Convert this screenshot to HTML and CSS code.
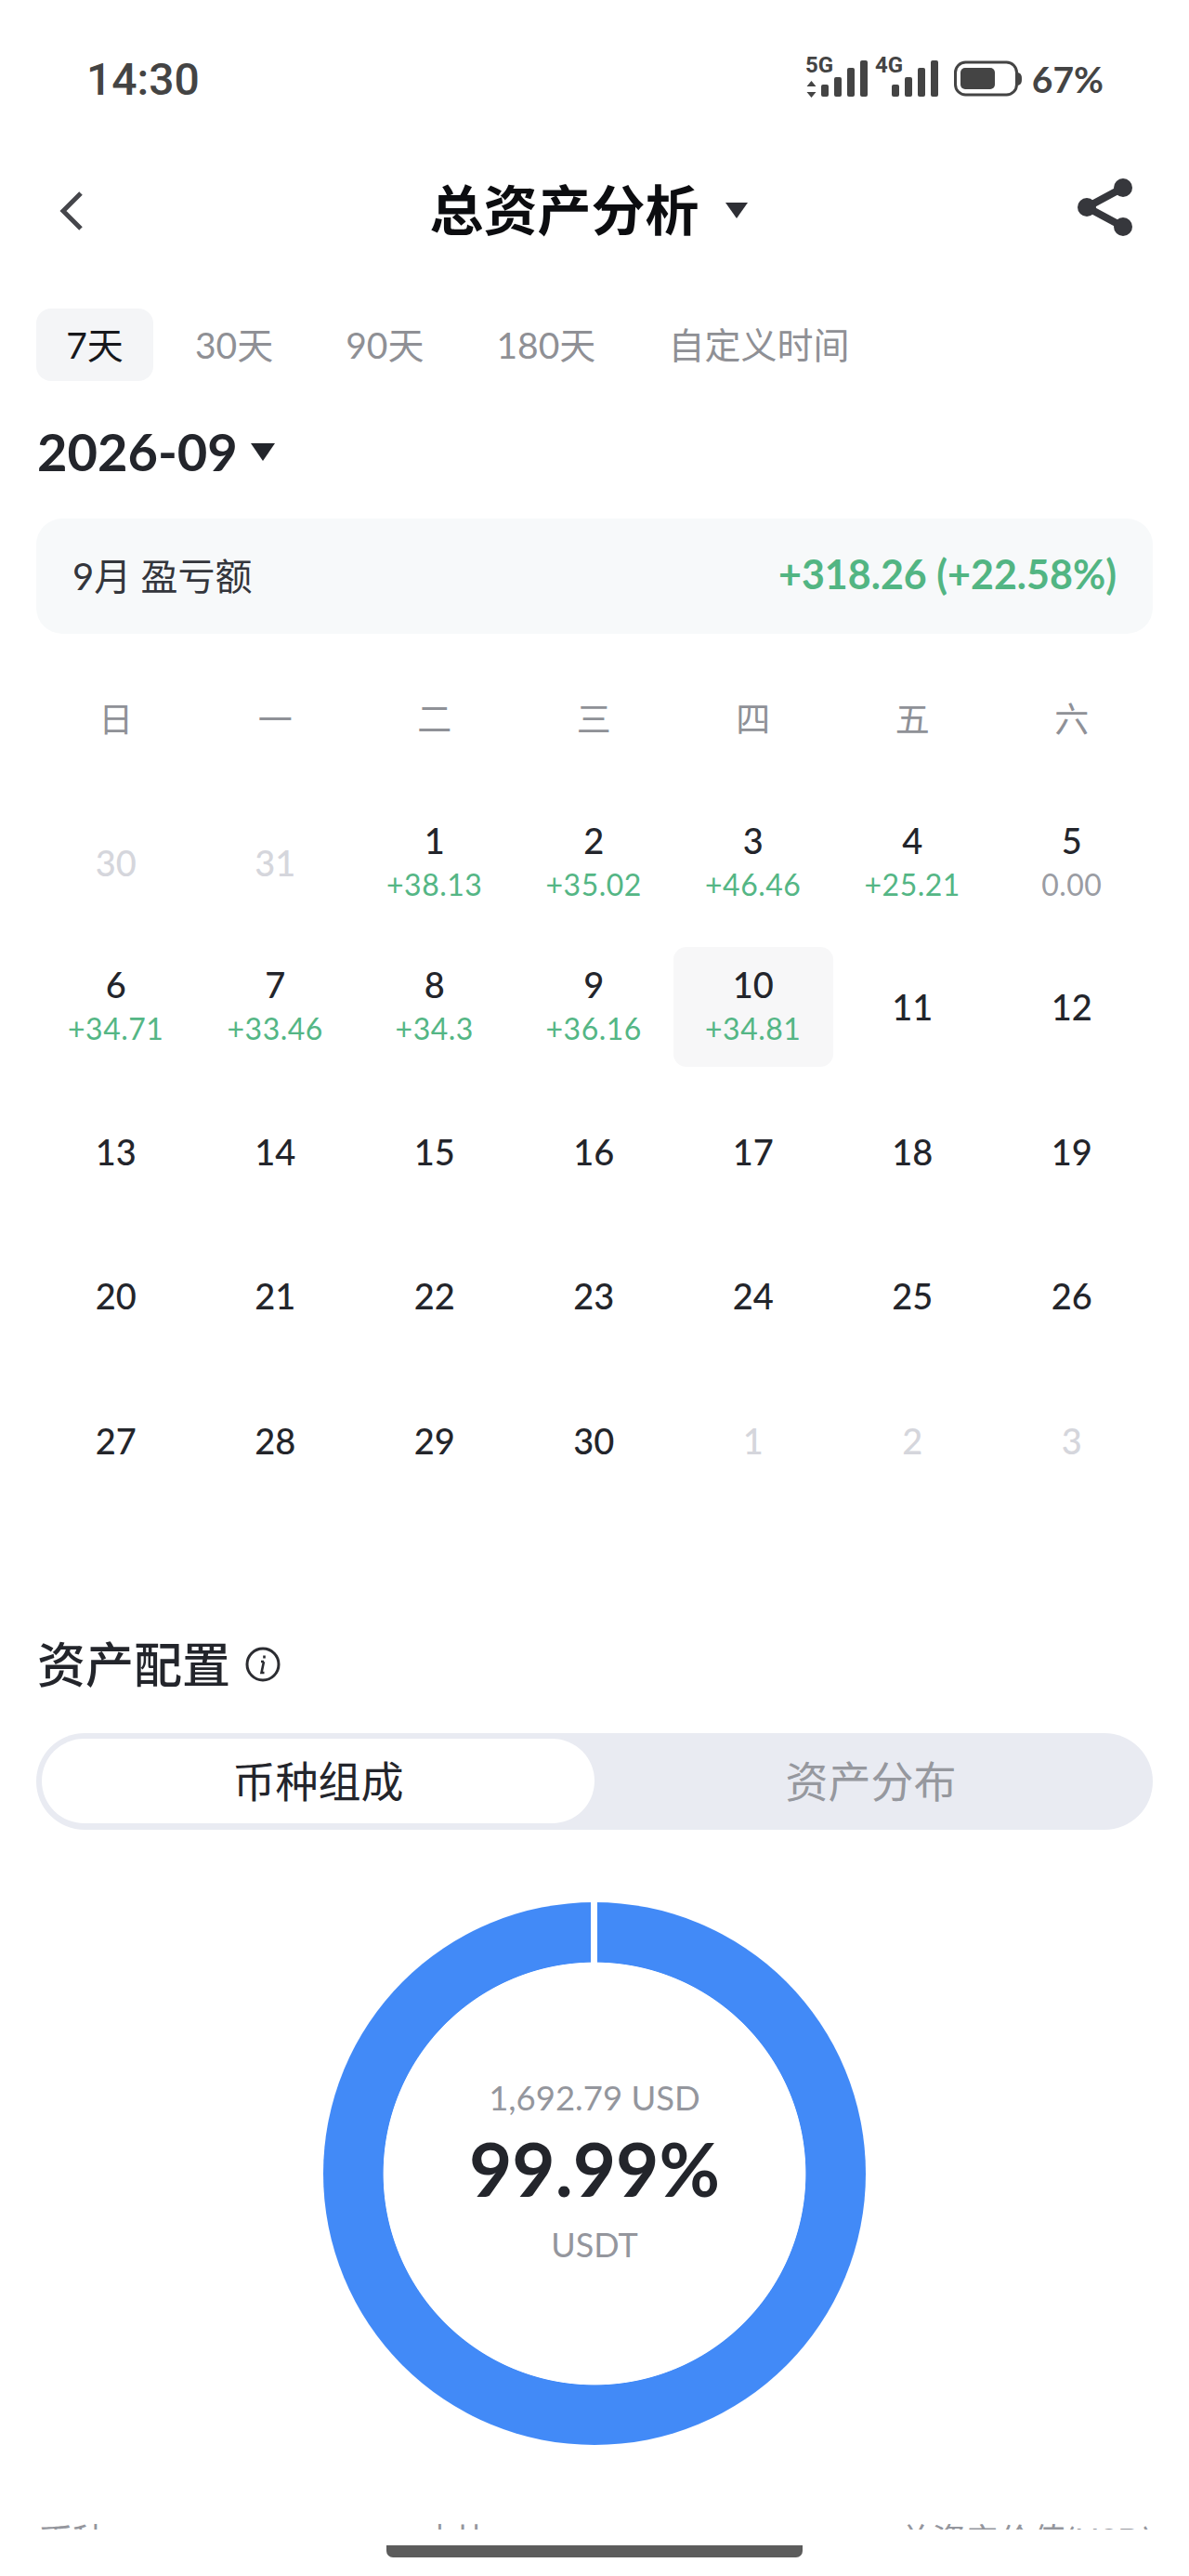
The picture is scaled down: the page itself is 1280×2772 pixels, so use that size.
FILE: index.html
```html
<!DOCTYPE html>
<html lang="zh-CN">
<head>
<meta charset="utf-8">
<title>总资产分析</title>
<link rel="stylesheet" href="styles.css">
</head>
<body>
<div class="screen">
  <div class="clip">
    <header class="status">
      <span class="time">14:30</span>
      <div class="status-right">
        <svg class="net" width="245" height="70" viewBox="868 50 245 70">
          <g fill="#444">
            <text x="868" y="78" class="net-label">5G</text>
            <path d="M874.500 87l5 6h-10zM874.500 105l-5-6h10z"/>
            <rect x="885" y="91" width="8" height="13" rx="2"/>
            <rect x="899" y="83" width="8" height="21" rx="2"/>
            <rect x="913" y="73" width="8" height="31" rx="2"/>
            <rect x="927" y="65" width="8" height="39" rx="2"/>
            <text x="943" y="78" class="net-label">4G</text>
            <rect x="961" y="91" width="8" height="13" rx="2"/>
            <rect x="975" y="83" width="8" height="21" rx="2"/>
            <rect x="989" y="73" width="8" height="31" rx="2"/>
            <rect x="1003" y="65" width="8" height="39" rx="2"/>
            <rect x="1029.500" y="67" width="66" height="35" rx="11" fill="none" stroke="#444" stroke-width="3"/>
            <rect x="1035" y="73" width="37" height="23" rx="5"/>
            <path d="M1097 78c3 1 4 3 4 7s-1 6-4 7z"/>
          </g>
        </svg>
        <span class="battery">67%</span>
      </div>
    </header>

    <nav class="nav">
      <svg class="back" width="26" height="42" viewBox="0 0 26 42"><path d="M23 2 4 21l19 19" fill="none" stroke="#45464b" stroke-width="5"/></svg>
      <div class="title-wrap">
        <h1 class="title">总资产分析</h1>
        <i class="tri tri-title"></i>
      </div>
      <svg class="share" width="60" height="64" viewBox="0 0 60 64"><g fill="#36373c" stroke="#36373c"><path d="M49 11 10 32l39 21" fill="none" stroke-width="8"/><circle cx="49" cy="11" r="10" stroke="none"/><circle cx="10" cy="32" r="10" stroke="none"/><circle cx="49" cy="53" r="10" stroke="none"/></g></svg>
    </nav>

    <div class="ranges">
      <span class="range range-on">7天</span>
      <span class="range">30天</span>
      <span class="range">90天</span>
      <span class="range">180天</span>
      <span class="range">自定义时间</span>
    </div>

    <div class="month">
      <span class="month-text">2026-09</span>
      <i class="tri tri-month"></i>
    </div>

    <div class="banner">
      <span class="banner-label">9月 盈亏额</span>
      <span class="banner-value">+318.26 (+22.58%)</span>
    </div>

    <div class="weekdays">
      <span>日</span><span>一</span><span>二</span><span>三</span><span>四</span><span>五</span><span>六</span>
    </div>

    <div class="cal">
      <div class="day off"><b>30</b></div>
      <div class="day off"><b>31</b></div>
      <div class="day"><b>1</b><em>+38.13</em></div>
      <div class="day"><b>2</b><em>+35.02</em></div>
      <div class="day"><b>3</b><em>+46.46</em></div>
      <div class="day"><b>4</b><em>+25.21</em></div>
      <div class="day"><b>5</b><em class="zero">0.00</em></div>
      <div class="day"><b>6</b><em>+34.71</em></div>
      <div class="day"><b>7</b><em>+33.46</em></div>
      <div class="day"><b>8</b><em>+34.3</em></div>
      <div class="day"><b>9</b><em>+36.16</em></div>
      <div class="day today"><b>10</b><em>+34.81</em></div>
      <div class="day"><b>11</b></div>
      <div class="day"><b>12</b></div>
      <div class="day"><b>13</b></div>
      <div class="day"><b>14</b></div>
      <div class="day"><b>15</b></div>
      <div class="day"><b>16</b></div>
      <div class="day"><b>17</b></div>
      <div class="day"><b>18</b></div>
      <div class="day"><b>19</b></div>
      <div class="day"><b>20</b></div>
      <div class="day"><b>21</b></div>
      <div class="day"><b>22</b></div>
      <div class="day"><b>23</b></div>
      <div class="day"><b>24</b></div>
      <div class="day"><b>25</b></div>
      <div class="day"><b>26</b></div>
      <div class="day"><b>27</b></div>
      <div class="day"><b>28</b></div>
      <div class="day"><b>29</b></div>
      <div class="day"><b>30</b></div>
      <div class="day off"><b>1</b></div>
      <div class="day off"><b>2</b></div>
      <div class="day off"><b>3</b></div>
    </div>

    <div class="section-head">
      <h2 class="section-title">资产配置</h2>
      <svg class="info" width="38" height="38" viewBox="0 0 38 38"><circle cx="19" cy="19" r="17" fill="none" stroke="#2b2c31" stroke-width="3"/><path d="M20.500 9.500v3M20 16l-3 0M20 16l-2.500 12h3" fill="none" stroke="#2b2c31" stroke-width="2.600"/></svg>
    </div>

    <div class="segment">
      <span class="seg seg-on">币种组成</span>
      <span class="seg">资产分布</span>
    </div>

    <div class="donut">
      <div class="gap"></div>
      <div class="donut-text">
        <span class="donut-amount">1,692.79 USD</span>
        <span class="donut-pct">99.99%</span>
        <span class="donut-name">USDT</span>
      </div>
    </div>

    <div class="table-head">
      <span>币种</span><span>占比</span><span>总资产价值(USD)</span>
    </div>
  </div>
  <footer class="gesture"><i class="gesture-bar"></i></footer>
</div>
</body>
</html>
```
FILE: styles.css
```css
* { box-sizing: border-box; }
html, body { margin: 0; padding: 0; background: #fff; }
body { font-family: Lato, "Noto Sans CJK SC", sans-serif; color: #23252b; }
.screen { width: 1280px; height: 2772px; overflow: hidden; background: #fff; }
.clip { height: 2722px; overflow: hidden; }

.status { height: 170px; display: flex; align-items: center; justify-content: space-between; padding: 0 92px 0 93px; color: #444; }
.time { font-size: 48px; font-weight: 500; font-family: Roboto, sans-serif; }
.status-right { display: flex; align-items: center; }
.net { display: block; }
.net-label { font: 700 24px Roboto, sans-serif; }
.battery { font: 700 39px Lato, sans-serif; margin-left: -1px; }

.nav { height: 112px; display: flex; align-items: center; justify-content: space-between; padding: 0 60px 0 64px; }
.back { margin-top: 2px; }
.title-wrap { display: flex; align-items: center; gap: 28px; margin-left: 17px; }
.title { margin: 0; font-size: 58px; line-height: 70px; font-weight: 700; color: #0c0d10; }
.tri { display: block; width: 0; height: 0; border-style: solid; border-color: #2e2f35 transparent transparent; }
.tri-title { border-width: 17px 12px 0; }
.share { margin-top: -6px; }

.ranges { display: flex; align-items: center; margin: 50px 0 0 39px; height: 78px; color: #8f9095; font-size: 39px; }
.range { line-height: 78px; margin-right: 78px; }
.range-on { width: 126px; margin-right: 45px; text-align: center; background: #f4f5f7; border-radius: 16px; color: #17181c; }

.month { display: flex; align-items: center; gap: 14px; margin: 37px 0 0 40px; height: 76px; }
.month-text { font-size: 56px; font-weight: 700; color: #23252b; }
.tri-month { border-width: 19px 13px 0; border-top-color: #23252b; margin-top: 2px; }

.banner { margin: 35px 39px 0; height: 124px; padding: 0 39px 5px 39px; background: #f7f9fa; border-radius: 28px; display: flex; align-items: center; justify-content: space-between; }
.banner-label { font-size: 40px; color: #34363c; }
.banner-value { font-size: 43px; font-weight: 700; color: #52b583; }

.weekdays { display: grid; grid-template-columns: repeat(7, 171.5px); margin: 59px 0 0 39px; height: 62px; align-items: center; text-align: center; font-size: 37px; color: #8f9197; }

.cal { display: grid; grid-template-columns: repeat(7, 171.5px); grid-auto-rows: 129px; row-gap: 26.500px; margin: 60px 0 0 39px; }
.day { display: flex; flex-direction: column; align-items: center; justify-content: center; border-radius: 14px; }
.day b { font-size: 38px; font-weight: 500; line-height: 48px; color: #23252b; }
.day em { font-size: 32px; letter-spacing: .5px; font-style: normal; font-weight: 400; line-height: 48px; color: #54b685; }
.day em.zero { color: #9a9ca3; }
.day.off b { color: #d5d6dc; }
.today { background: #f7f7f8; }

.section-head { display: flex; align-items: center; gap: 16px; margin: 149px 0 0 40px; height: 56px; }
.section-title { margin: 0; font-size: 52px; font-weight: 500; line-height: 56px; color: #23252b; }

.segment { display: flex; margin: 46px 39px 0; height: 104px; padding: 6px; background: #e9ebf2; border-radius: 52px; }
.seg { flex: 1; display: flex; align-items: center; justify-content: center; font-size: 46px; font-weight: 400; color: #96989e; height: 91px; padding-bottom: 5px; }
.seg-on { background: #fff; border-radius: 46px; color: #23252b; }

.donut { position: relative; width: 584px; height: 584px; margin: 78px auto 0; border-radius: 50%; background: radial-gradient(circle closest-side, #fff 227px, #428af7 227.800px); }
.gap { position: absolute; left: 288px; top: 0; width: 7px; height: 66px; background: #fff; }
.donut-text { height: 100%; display: flex; flex-direction: column; align-items: center; padding-top: 188px; }
.donut-amount { font-size: 36.500px; line-height: 44px; color: #94969d; }
.donut-pct { font-size: 80px; font-weight: 700; line-height: 100px; margin-top: 4px; color: #23252b; }
.donut-name { font-size: 36px; line-height: 44px; margin-top: 10px; color: #94969d; }

.table-head { display: grid; grid-template-columns: 414px 1fr auto; margin: 82px 40px 0 42px; font-size: 36px; line-height: 40px; color: #94969d; }

.gesture { height: 50px; display: flex; justify-content: center; padding-top: 17px; }
.gesture-bar { display: block; width: 448px; height: 13px; background: #5c5c5c; border-radius: 0 0 7px 7px; }
```
